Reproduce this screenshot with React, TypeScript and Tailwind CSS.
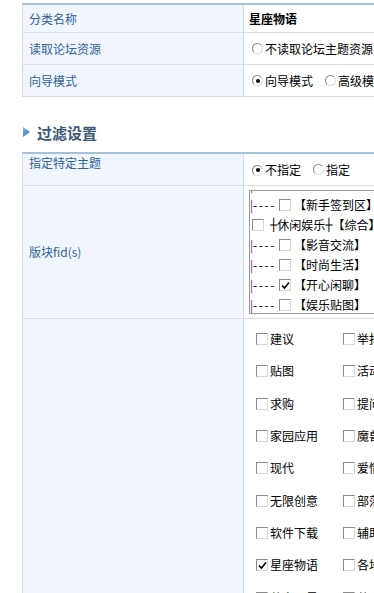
import React from 'react';

const FONT = 'font-["Noto_Sans_CJK_SC","Noto_Sans",sans-serif]';

function Radio({ checked }: { checked?: boolean }) {
  return (
    <span className="relative inline-flex h-[11px] w-[11px] shrink-0 items-center justify-center rounded-full border border-t-[#8a8a8a] border-l-[#8a8a8a] border-r-[#dcdcdc] border-b-[#dcdcdc] bg-white">
      {checked && <span className="h-[4px] w-[4px] rounded-full bg-black" />}
    </span>
  );
}

function Box({ checked }: { checked?: boolean }) {
  return (
    <span className="inline-flex h-[12px] w-[12px] shrink-0 items-center justify-center border border-t-[#8a8a8a] border-l-[#8a8a8a] border-r-[#d8d8d8] border-b-[#d8d8d8] bg-white">
      {checked && (
        <svg width="9" height="9" viewBox="0 0 9 9">
          <path d="M1 4.5 L3.5 7 L8 1.5" fill="none" stroke="#000" strokeWidth="1.6" />
        </svg>
      )}
    </span>
  );
}

const forums: { sub: boolean; name: string; checked?: boolean }[] = [
  { sub: true, name: '【站务公告】' },
  { sub: true, name: '【新手签到区】' },
  { sub: false, name: '休闲娱乐' },
  { sub: true, name: '【影音交流】' },
  { sub: true, name: '【时尚生活】' },
  { sub: true, name: '【开心闲聊】', checked: true },
  { sub: true, name: '【娱乐贴图】' },
];

const types: [string, string][] = [
  ['建议', '举报'],
  ['贴图', '活动'],
  ['求购', '提问'],
  ['家园应用', '魔兽'],
  ['现代', '爱情'],
  ['无限创意', '部落'],
  ['软件下载', '辅助'],
  ['星座物语', '各地'],
  ['共享明星', '共享'],
];

function Row({ label, h, children, top }: { label?: string; h: string; children: React.ReactNode; top?: boolean }) {
  return (
    <div className={`flex border-b border-[#d5e0ea] ${h}`}>
      <div
        className={`flex w-[221px] shrink-0 border-r border-[#d5e0ea] bg-[#f1f6fd] pl-[6px] text-[#2f639a] ${
          top ? 'items-start pt-[3px]' : 'items-center'
        }`}
      >
        {label}
      </div>
      <div className="flex min-w-0 flex-1">{children}</div>
    </div>
  );
}

export default function App() {
  return (
    <div className="h-[593px] w-screen overflow-hidden bg-white">
      <div className={`${FONT} w-[620px] pl-[22px] pt-[3px] text-[12px] leading-none text-black`}>
        <div className="border-l border-t-2 border-l-[#cdd8e3] border-t-[#a4c1da]">
          <Row label="分类名称" h="h-[28px]">
            <div className="flex items-center pl-[5px] font-bold">星座物语</div>
          </Row>
          <Row label="读取论坛资源" h="h-[32px]">
            <div className="flex items-center gap-[2px] pl-[8px]">
              <Radio />
              <span>不读取论坛主题资源</span>
              <Radio />
              <span>读取</span>
            </div>
          </Row>
          <Row label="向导模式" h="h-[32px]">
            <div className="flex items-center pl-[8px]">
              <Radio checked />
              <span className="ml-[2px]">向导模式</span>
              <span className="ml-[12px]">
                <Radio />
              </span>
              <span className="ml-[2px]">高级模式</span>
            </div>
          </Row>
        </div>

        <div className="flex h-[55px] items-center gap-[7px] pl-[1px] pt-[15px]">
          <svg width="7" height="10" viewBox="0 0 7 10">
            <defs>
              <linearGradient id="tri" x1="0" y1="0" x2="1" y2="1">
                <stop offset="0" stopColor="#8fb6ea" />
                <stop offset="1" stopColor="#2f68bd" />
              </linearGradient>
            </defs>
            <path d="M0 0 L7 5 L0 10 Z" fill="url(#tri)" />
          </svg>
          <span className="text-[15px] font-bold text-[#3b5876]">过滤设置</span>
        </div>

        <div className="border-l border-t-2 border-l-[#cdd8e3] border-t-[#a4c1da]">
          <Row label="指定特定主题" h="h-[32px]" top>
            <div className="flex items-center pl-[8px] pt-[1px]">
              <Radio checked />
              <span className="ml-[2px]">不指定</span>
              <span className="ml-[12px]">
                <Radio />
              </span>
              <span className="ml-[2px]">指定</span>
            </div>
          </Row>
          <Row label="版块fid(s)" h="h-[133px]">
            <div className="flex pl-[5px] pt-[4px]">
              <div className="h-[124px] w-[200px] overflow-hidden border border-[#9a9a9a] bg-white">
                <div className="-mt-[16px]">
                  {forums.map((f, i) => (
                    <div key={i} className="flex h-[20px] items-center whitespace-nowrap">
                      {f.sub ? (
                        <>
                          <span className="w-[3px] text-[#8a1a8a]">|</span>
                          <span className="tracking-[1.6px]">----</span>
                          <span className="ml-[3px]">
                            <Box checked={f.checked} />
                          </span>
                          <span className="ml-[3px]">{f.name}</span>
                        </>
                      ) : (
                        <>
                          <span className="ml-[2px]">
                            <Box />
                          </span>
                          <span className="ml-[6px] font-['DejaVu_Sans'] text-black">┼</span>
                          <span>{f.name}</span>
                          <span className="font-['DejaVu_Sans'] text-black">┼</span>
                          <span>【综合】</span>
                        </>
                      )}
                    </div>
                  ))}
                </div>
              </div>
            </div>
          </Row>
          <Row h="h-[300px]">
            <div className="pl-[12px] pt-[4px]">
              {types.map(([a, b], i) => (
                <div key={i} className="flex h-[32.3px] items-center">
                  <div className="flex w-[87px] items-center gap-[2px]">
                    <Box checked={a === '星座物语'} />
                    <span>{a}</span>
                  </div>
                  <div className="flex items-center gap-[2px]">
                    <Box />
                    <span>{b}</span>
                  </div>
                </div>
              ))}
            </div>
          </Row>
        </div>
      </div>
    </div>
  );
}
